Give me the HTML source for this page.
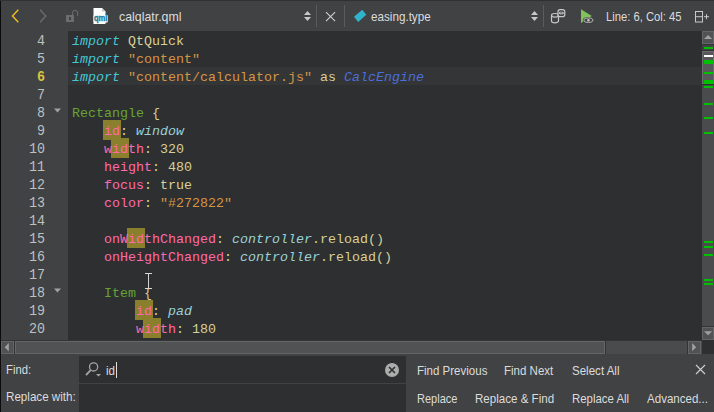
<!DOCTYPE html>
<html>
<head>
<meta charset="utf-8">
<style>
*{box-sizing:border-box;margin:0;padding:0}
html,body{width:714px;height:412px;overflow:hidden;background:#404244}
body{position:relative;font-family:"Liberation Sans",sans-serif;font-size:13px;color:#dcdcdc}
.abs{position:absolute}
svg{position:absolute;left:0;top:0;overflow:visible}
#topstrip{left:0;top:0;width:714px;height:1px;background:#303132}
#leftstrip{left:0;top:1px;width:1px;height:411px;background:#0c0c0c}
#toolbar{left:1px;top:1px;width:713px;height:30px;background:#404244}
#gutter{left:1px;top:31px;width:67px;height:309px;background:#404244}
#editor{left:68px;top:31px;width:634px;height:309px;background:#2e2f30;overflow:hidden}
#curline{left:0;top:36px;width:634px;height:18px;background:#343536}
.ln{position:absolute;left:0;width:45px;text-align:right;font-family:"Liberation Mono",monospace;font-size:14.67px;line-height:18px;height:18px;color:#bec0c2;white-space:pre;margin-top:1px;transform:scaleX(0.909);transform-origin:100% 0}
.ln.cur{color:#d6c540;font-weight:bold}
.cl{position:absolute;left:4px;font-family:"Liberation Mono",monospace;font-size:13.333px;line-height:18px;height:18px;color:#d6cf9a;white-space:pre;margin-top:2px}
.k{color:#45c6d6;font-style:italic}
.s{color:#d69545}
.t{color:#66a334}
.b{color:#ff6aad}
.i{color:#9acfd6;font-style:italic}
.j{color:#4a6ede;font-style:italic}
.hl{position:absolute;background:#8a7f2c;height:19.25px;width:17.75px;margin-top:-0.75px}
.tx{position:absolute;white-space:pre;line-height:16px;height:16px;font-size:13px;transform-origin:0 0}
.sep{position:absolute;width:1px;top:5px;height:22px;background:#595b5d}
#vscroll{left:702px;top:31px;width:12px;height:309px;background:#4a4b4d}
.gm{position:absolute;left:2px;width:9px;height:2px;background:#00c000}
.sbtn{position:absolute;background:#505254;border:1px solid #626466}
#hscroll{left:1px;top:340px;width:701px;height:14px;background:#4a4b4d}
#corner{left:702px;top:340px;width:12px;height:14px;background:#2e2f30}
#findbar{left:1px;top:354px;width:713px;height:58px;background:#404244}
.inp{position:absolute;background:#2e2f30}
</style>
</head>
<body>
<div id="toolbar" class="abs"></div>
<div id="topstrip" class="abs"></div>
<div id="gutter" class="abs"></div>
<div id="editor" class="abs">
<div id="curline" class="abs"></div>
<div class="hl" style="left:35px;top:90px"></div>
<div class="hl" style="left:43px;top:108px"></div>
<div class="hl" style="left:59px;top:198px"></div>
<div class="hl" style="left:67px;top:270px"></div>
<div class="hl" style="left:75px;top:288px"></div>
<div class="cl" style="top:0px"><span class="k">import</span> QtQuick</div>
<div class="cl" style="top:18px"><span class="k">import</span> <span class="s">"content"</span></div>
<div class="cl" style="top:36px"><span class="k">import</span> <span class="s">"content/calculator.js"</span> as <span class="j">CalcEngine</span></div>
<div class="cl" style="top:72px"><span class="t">Rectangle</span> {</div>
<div class="cl" style="top:90px">    <span class="b">id</span>: <span class="i">window</span></div>
<div class="cl" style="top:108px">    <span class="b">width</span>: 320</div>
<div class="cl" style="top:126px">    <span class="b">height</span>: 480</div>
<div class="cl" style="top:144px">    <span class="b">focus</span>: true</div>
<div class="cl" style="top:162px">    <span class="b">color</span>: <span class="s">"#272822"</span></div>
<div class="cl" style="top:198px">    <span class="b">onWidthChanged</span>: <span class="i">controller</span>.reload()</div>
<div class="cl" style="top:216px">    <span class="b">onHeightChanged</span>: <span class="i">controller</span>.reload()</div>
<div class="cl" style="top:252px">    <span class="t">Item</span> {</div>
<div class="cl" style="top:270px">        <span class="b">id</span>: <span class="i">pad</span></div>
<div class="cl" style="top:288px">        <span class="b">width</span>: 180</div>
</div>
<div id="lns">
<div class="ln" style="top:31px">4</div>
<div class="ln" style="top:49px">5</div>
<div class="ln cur" style="top:67px">6</div>
<div class="ln" style="top:85px">7</div>
<div class="ln" style="top:103px">8</div>
<div class="ln" style="top:121px">9</div>
<div class="ln" style="top:139px">10</div>
<div class="ln" style="top:157px">11</div>
<div class="ln" style="top:175px">12</div>
<div class="ln" style="top:193px">13</div>
<div class="ln" style="top:211px">14</div>
<div class="ln" style="top:229px">15</div>
<div class="ln" style="top:247px">16</div>
<div class="ln" style="top:265px">17</div>
<div class="ln" style="top:283px">18</div>
<div class="ln" style="top:301px">19</div>
<div class="ln" style="top:319px">20</div>
</div>
<div id="ibeam" class="abs" style="left:145px;top:273px;width:7px;height:16px">
<div class="abs" style="left:0;top:0;width:7px;height:1px;background:#d8d8d8"></div>
<div class="abs" style="left:0;top:15px;width:7px;height:1px;background:#d8d8d8"></div>
<div class="abs" style="left:3px;top:0;width:1px;height:16px;background:#d4d4d4"></div>
</div>
<div id="vscroll" class="abs">
<div class="sbtn" style="left:0;top:0;width:12px;height:13px"></div>
<div class="abs" style="left:0;top:13px;width:12px;height:7px;background:#404244;border-top:1px solid #333435;border-bottom:1px solid #333435"></div>
<div class="sbtn" style="left:0;top:20px;width:12px;height:33px;background:#56585a;border-color:#6a6c6e"></div>
<div class="abs" style="left:0;top:53px;width:12px;height:1px;background:#303132"></div>
<div class="sbtn" style="left:0;top:296px;width:12px;height:13px"></div>
<div class="abs" style="left:0;top:295px;width:12px;height:1px;background:#333435"></div>
<div class="abs" style="left:2px;top:24px;width:9px;height:2.3px;background:#ffffff"></div>
<div class="gm" style="top:16.00px"></div>
<div class="gm" style="top:29.00px"></div>
<div class="gm" style="top:30.99px"></div>
<div class="gm" style="top:41.00px"></div>
<div class="gm" style="top:49.00px"></div>
<div class="gm" style="top:50.99px"></div>
<div class="gm" style="top:55.00px"></div>
<div class="gm" style="top:72.00px"></div>
<div class="gm" style="top:86.00px"></div>
<div class="gm" style="top:101.00px"></div>
<div class="gm" style="top:210.00px"></div>
<div class="gm" style="top:215.00px"></div>
<div class="gm" style="top:223.00px"></div>
<div class="gm" style="top:248.00px"></div>
<div class="gm" style="top:252.00px"></div>
</div>
<div id="hscroll" class="abs">
<div class="sbtn" style="left:0;top:1px;width:13px;height:13px"></div>
<div class="sbtn" style="left:14px;top:1px;width:590px;height:13px;background:#505254;border-color:#646668"></div>
<div class="sbtn" style="left:687px;top:1px;width:13px;height:13px"></div>
<div class="abs" style="left:0;top:0;width:701px;height:1px;background:#333435"></div>
<div class="abs" style="left:604px;top:1px;width:1px;height:13px;background:#333435"></div>
<div class="abs" style="left:13px;top:1px;width:1px;height:13px;background:#333435"></div>
<div class="abs" style="left:686px;top:1px;width:1px;height:13px;background:#333435"></div>
</div>
<div id="corner" class="abs"></div>
<div id="findbar" class="abs">
<div class="inp" style="left:78px;top:2px;width:326.6px;height:27px"></div>
<div class="inp" style="left:78px;top:30px;width:326.6px;height:28px"></div>
</div>
<div class="sep" style="left:316px"></div>
<div class="sep" style="left:344px"></div>
<div class="sep" style="left:543px"></div>
<div class="tx" style="left:118.50px;top:8.50px;transform:scaleX(0.9506)">calqlatr.qml</div>
<div class="tx" style="left:371.00px;top:8.50px;transform:scaleX(0.8977)">easing.type</div>
<div class="tx" style="left:606.40px;top:8.50px;transform:scaleX(0.8645)">Line: 6, Col: 45</div>
<div class="tx" style="left:6.30px;top:362.00px;transform:scaleX(0.8683)">Find:</div>
<div class="tx" style="left:6.30px;top:389.00px;transform:scaleX(0.8934)">Replace with:</div>
<div class="tx" style="left:106.40px;top:363.00px;transform:scaleX(0.8889)">id</div>
<div class="tx" style="left:416.60px;top:363.00px;transform:scaleX(0.8857)">Find Previous</div>
<div class="tx" style="left:504.40px;top:363.00px;transform:scaleX(0.8860)">Find Next</div>
<div class="tx" style="left:571.50px;top:363.00px;transform:scaleX(0.8881)">Select All</div>
<div class="tx" style="left:416.60px;top:391.00px;transform:scaleX(0.8469)">Replace</div>
<div class="tx" style="left:474.60px;top:391.00px;transform:scaleX(0.8899)">Replace &amp; Find</div>
<div class="tx" style="left:571.50px;top:391.00px;transform:scaleX(0.8778)">Replace All</div>
<div class="tx" style="left:646.50px;top:391.00px;transform:scaleX(0.8885)">Advanced...</div>
<svg width="714" height="412" viewBox="0 0 714 412">
<!-- back / forward chevrons -->
<path d="M18.3 9.8 L12.5 16 L18.3 22.2" fill="none" stroke="#ecbc1c" stroke-width="1.45"/>
<path d="M40 9.8 L45.8 16 L40 22.2" fill="none" stroke="#6b6d6f" stroke-width="1.3"/>
<!-- lock -->
<rect x="66" y="15" width="8" height="7" fill="#6a6c6e"/>
<rect x="69" y="17" width="2" height="3" fill="#404244"/>
<path d="M72.5 15 V13 A2.6 2.6 0 0 1 77.7 13 V16" fill="none" stroke="#6a6c6e" stroke-width="1"/>
<!-- qml file icon -->
<path d="M93.5 8 H102 L105.5 11.5 V24 H93.5 Z" fill="#ffffff"/>
<path d="M102 8 V11.5 H105.5 Z" fill="#c8c8c8"/>
<rect x="93.5" y="15" width="14.3" height="7.6" rx="1" fill="#ffffff"/>
<text x="93.9" y="20.8" font-family="Liberation Sans" font-weight="bold" font-size="8.6" fill="#1a7d9c" stroke="#1a7d9c" stroke-width="0.35" textLength="13.4" lengthAdjust="spacingAndGlyphs">qml</text>
<!-- combo arrows 1 -->
<path d="M304 15 L311 15 L307.5 11 Z M304 17 L311 17 L307.5 21 Z" fill="#c8c8c8"/>
<!-- close X -->
<path d="M326 12.1 L335.1 21.2 M335.1 12.1 L326 21.2" stroke="#d0d0d0" stroke-width="1.1" fill="none"/>
<!-- diamond -->
<path d="M362.3 9.8 L366.3 14.8 L358.2 22 L354 16.7 Z" fill="#30b4cc"/>
<!-- combo arrows 2 -->
<path d="M531 15 L538 15 L534.5 11 Z M531 17 L538 17 L534.5 21 Z" fill="#c8c8c8"/>
<!-- cylinder + badge -->
<path d="M551.5 15.5 V21 A3.5 1.8 0 0 0 558.5 21 V15.5" fill="none" stroke="#c8c8c8" stroke-width="1.2"/>
<ellipse cx="555" cy="15.3" rx="3.5" ry="1.8" fill="none" stroke="#c8c8c8" stroke-width="1.2"/>
<rect x="558" y="9.6" width="6.8" height="7" rx="2.2" fill="#404244" stroke="#c8c8c8" stroke-width="1.2"/>
<path d="M559.3 13.1 H563.5 M560.6 11.7 L559.3 13.1 L560.6 14.5 M562.2 11.7 L563.5 13.1 L562.2 14.5" stroke="#e0e0e0" stroke-width="0.9" fill="none"/>
<!-- green run arrow + eye -->
<path d="M581 9.3 L581 23 L591.8 16 Z" fill="#80c25c"/>
<ellipse cx="588.4" cy="20.2" rx="5.6" ry="3.3" fill="#404244"/>
<ellipse cx="588.4" cy="20.2" rx="4.5" ry="2.2" fill="none" stroke="#c8c8c8" stroke-width="0.9"/>
<circle cx="588.4" cy="20.2" r="1.2" fill="#c8c8c8"/>
<!-- split icon -->
<rect x="695.5" y="11.5" width="7" height="10.5" fill="none" stroke="#c8c8c8" stroke-width="1"/>
<path d="M695.5 16.7 H702.5 M704 16.7 H709 M706.5 14.2 V19.2" stroke="#c8c8c8" stroke-width="1" fill="none"/>
<!-- fold arrows -->
<path d="M54 108.6 L61 108.6 L57.5 112.6 Z" fill="#a0a2a4"/>
<path d="M54 288.6 L61 288.6 L57.5 292.6 Z" fill="#a0a2a4"/>
<!-- scrollbar arrows -->
<path d="M704 39.1 L712.2 39.1 L708.1 35 Z" fill="#a0a0a0"/>
<path d="M704 331.2 L712.2 331.2 L708.1 335.3 Z" fill="#a0a0a0"/>
<path d="M8.8 343.1 L8.8 351.3 L4.7 347.2 Z" fill="#a0a0a0"/>
<path d="M692.1 343.1 L692.1 351.3 L696.2 347.2 Z" fill="#a0a0a0"/>
<!-- magnifier -->
<circle cx="93.6" cy="366.9" r="4.1" fill="none" stroke="#a4a4a4" stroke-width="1.3"/>
<path d="M90.6 370.2 L86 375.2" stroke="#a4a4a4" stroke-width="1.8" fill="none"/>
<path d="M96 374 L101 374 L98.5 376.5 Z" fill="#a4a4a4"/>
<!-- caret in find -->
<rect x="116" y="362" width="1" height="16" fill="#e0e0e0"/>
<!-- clear button -->
<circle cx="392" cy="370" r="7" fill="#acacac"/>
<path d="M389 367 L395 373 M395 367 L389 373" stroke="#303132" stroke-width="1.7" fill="none"/>
<!-- findbar close X -->
<path d="M696 365 L705 374 M705 365 L696 374" stroke="#d0d0d0" stroke-width="1.1" fill="none"/>

</svg>
<div id="leftstrip" class="abs"></div>
</body>
</html>
